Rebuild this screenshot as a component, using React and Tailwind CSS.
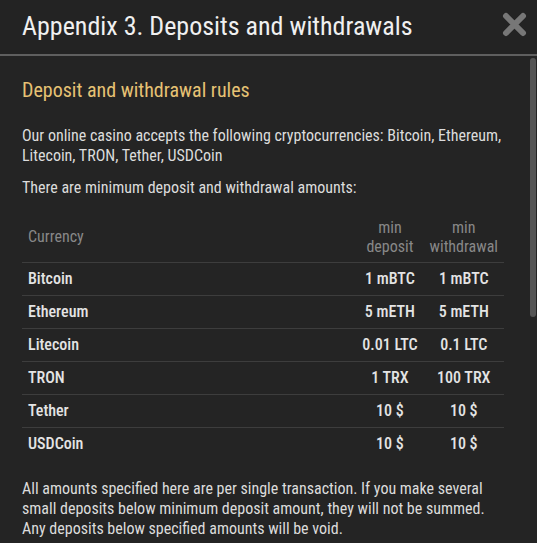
import React from "react";

const rows = [
    ["Bitcoin", "1 mBTC", "1 mBTC"],
    ["Ethereum", "5 mETH", "5 mETH"],
    ["Litecoin", "0.01 LTC", "0.1 LTC"],
    ["TRON", "1 TRX", "100 TRX"],
    ["Tether", "10 $", "10 $"],
    ["USDCoin", "10 $", "10 $"],
];

const textStyle = "text-[16px] leading-[20px] text-[#dcdcdc]";

const App = () => {
    return (
        <div className="w-[537px] h-[543px] bg-[#242424] flex flex-col overflow-hidden font-['Roboto_Condensed',Roboto,sans-serif] font-stretch-condensed">
            <div className="h-[56px] shrink-0 flex items-center justify-between pl-[22px] pr-[10px] bg-[#232323] border-b-2 border-[#5f5f5f]">
                <h1 className="text-[26px] leading-[32px] text-[#f0f0f0] pb-[2px]">Appendix 3. Deposits and withdrawals</h1>
                <svg width="25" height="25" viewBox="0 0 25 25" className="mb-[6px]">
                    <path d="M4 4 L21 21 M21 4 L4 21" stroke="#777" strokeWidth="6" strokeLinecap="round" />
                </svg>
            </div>
            <div className="relative flex-1 overflow-hidden">
                <div className="pl-[22px] pr-[33px] pt-[20px]">
                    <h2 className="text-[20px] leading-[28px] text-[#e6c274] mb-[22px]">Deposit and withdrawal rules</h2>
                    <p className={`${textStyle} mb-[12px]`}>
                        Our online casino accepts the following cryptocurrencies: Bitcoin, Ethereum, Litecoin, TRON, Tether, USDCoin
                    </p>
                    <p className={`${textStyle} mb-[12px]`}>There are minimum deposit and withdrawal amounts:</p>
                    <table className="w-full border-collapse text-[16px]">
                        <thead>
                            <tr className="h-[52px] text-[#888]">
                                <th className="text-left font-normal px-[6px] pt-[2px]">Currency</th>
                                <th className="font-normal px-[6px] pt-[2px] leading-[19px] w-[64px]">min<br />deposit</th>
                                <th className="font-normal px-[6px] pt-[2px] leading-[19px] w-[80px]">min<br />withdrawal</th>
                            </tr>
                        </thead>
                        <tbody>
                            {rows.map((row) => (
                                <tr key={row[0]} className="h-[33px] border-t border-[#3d3d3d] text-[#e4e4e4] font-medium">
                                    <td className="px-[6px]">{row[0]}</td>
                                    <td className="px-[6px] text-center whitespace-nowrap">{row[1]}</td>
                                    <td className="px-[6px] text-center whitespace-nowrap">{row[2]}</td>
                                </tr>
                            ))}
                        </tbody>
                    </table>
                    <p className={`${textStyle} mt-[19px]`}>
                        All amounts specified here are per single transaction. If you make several small deposits below minimum deposit amount, they will not be summed. Any deposits below specified amounts will be void.
                    </p>
                </div>
                <div className="absolute right-[1px] top-[2px] w-[6px] h-[259px] rounded-full bg-[#555]" />
            </div>
        </div>
    );
};

export default App;
